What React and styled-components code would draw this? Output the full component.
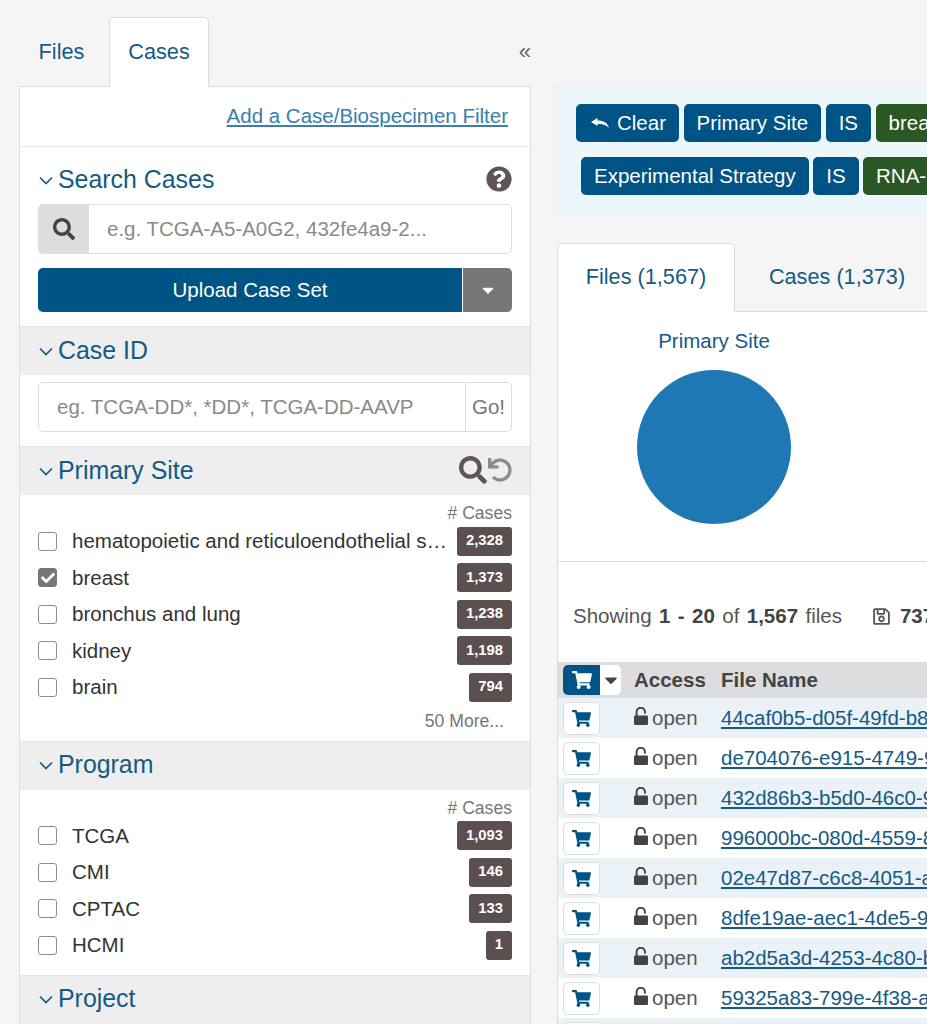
import React from 'react';
import styled, { createGlobalStyle } from 'styled-components';
import {
  FaCaretDown,
  FaCheck,
  FaQuestionCircle,
  FaRegSave,
  FaSearch,
  FaShoppingCart,
  FaUndo,
} from 'react-icons/fa';

const GlobalStyle = createGlobalStyle`
  html, body {
    margin: 0;
    padding: 0;
    background: #f5f5f5;
    font-family: "Liberation Sans", Arial, sans-serif;
    color: #333;
  }
  * { box-sizing: border-box; }
`;

const Page = styled.div`
  width: 927px;
  height: 1024px;
  overflow: hidden;
  display: flex;
  align-items: flex-start;
  padding: 17px 0 0 19px;
`;

const LeftColumn = styled.div`
  flex: none;
  width: 512px;
`;

const RightColumn = styled.div`
  flex: none;
  width: 800px;
  margin: 68px 0 0 26px;
`;

const TabRow = styled.div`
  display: flex;
  align-items: flex-end;
  gap: ${p => p.$gap || 0}px;
  position: relative;
  z-index: 1;
  height: ${p => p.$height}px;
  margin-bottom: -1px;
`;

const Tab = styled.div`
  display: flex;
  align-items: center;
  justify-content: center;
  height: 100%;
  width: ${p => p.$width}px;
  padding-bottom: ${p => p.$lift || 0}px;
  font-size: 21.7px;
  color: #155a85;
  border-radius: 5px 5px 0 0;
  border: 1px solid ${p => (p.$active ? '#ddd' : 'transparent')};
  border-bottom-color: ${p => (p.$active ? '#fff' : 'transparent')};
  background: ${p => (p.$active ? '#fff' : 'transparent')};
`;

const CollapseIcon = styled.div`
  margin-left: auto;
  align-self: center;
  color: #666;
  font-size: 22px;
  line-height: 25px;
  padding-bottom: 1px;
`;

const Panel = styled.div`
  background: #fff;
  border: 1px solid #ddd;
`;

const LinkRow = styled.div`
  height: 60px;
  display: flex;
  align-items: center;
  justify-content: flex-end;
  padding: 0 22px 2px 0;
  border-bottom: 1px solid #e6e6e6;
`;

const FilterLink = styled.a`
  font-size: 20.5px;
  color: #3b7eab;
  text-decoration: underline;
`;

const SearchSection = styled.div`
  padding: 17px 18px 14px;
  border-bottom: 1px solid #e6e6e6;
`;

const FacetHeader = styled.div`
  display: flex;
  align-items: center;
  height: 48px;
  padding: 0 18px 2px;
  background: ${p => (p.$plain ? 'transparent' : '#eee')};
  color: #155a85;
  font-size: 24.9px;
  ${p => p.$plain && 'height: 30px; padding: 0; margin-bottom: 10px;'}
`;

const Chevron = styled.svg`
  flex: none;
  width: 14px;
  height: 9px;
  margin: 2px 5px 0 1px;
  fill: none;
  stroke: #155a85;
  stroke-width: 1.7;
`;

const HeaderTools = styled.div`
  margin-left: auto;
  display: flex;
  align-items: center;
  gap: ${p => p.$gap || 0}px;
  color: #5f5555;
`;

const InputGroup = styled.div`
  display: flex;
  height: 50px;
  border: 1px solid #ddd;
  border-radius: 5px;
  overflow: hidden;
  background: #fff;
`;

const InputAddon = styled.div`
  flex: none;
  width: 50px;
  display: flex;
  align-items: center;
  justify-content: center;
  background: #ddd;
  color: #444;
  font-size: 22px;
`;

const Placeholder = styled.div`
  flex: 1;
  display: flex;
  align-items: center;
  font-size: 20.5px;
  color: #8a8a8a;
  padding-left: 18px;
`;

const GoButton = styled.div`
  flex: none;
  width: 46px;
  display: flex;
  align-items: center;
  justify-content: center;
  font-size: 20.5px;
  color: #777;
  border-left: 1px solid #ddd;
`;

const UploadGroup = styled.div`
  display: flex;
  height: 44px;
  margin-top: 14px;
  border-radius: 5px;
  overflow: hidden;
`;

const UploadButton = styled.div`
  flex: 1;
  display: flex;
  align-items: center;
  justify-content: center;
  background: #005385;
  color: #fff;
  font-size: 20.5px;
`;

const UploadCaret = styled.div`
  flex: none;
  width: 50px;
  display: flex;
  align-items: center;
  justify-content: center;
  background: #777;
  border-left: 1px solid #fff;
  color: #fff;
  font-size: 18px;
`;

const InputSection = styled.div`
  padding: 7px 18px 14px;
  border-bottom: 1px solid #e6e6e6;
`;

const FacetBody = styled.div`
  padding: 9px 18px ${p => p.$bottom}px;
  border-bottom: 1px solid #e6e6e6;
`;

const CountHeading = styled.div`
  text-align: right;
  font-size: 17.6px;
  line-height: 18px;
  color: #777;
  margin-bottom: 1px;
`;

const FacetRow = styled.div`
  display: flex;
  align-items: center;
  height: 36.5px;
`;

const CheckBox = styled.div`
  flex: none;
  width: 19px;
  height: 19px;
  margin-right: 15px;
  border-radius: 3px;
  border: 1px solid ${p => (p.$checked ? '#777' : '#8d8d8d')};
  background: ${p => (p.$checked ? '#777' : '#fff')};
  color: #fff;
  font-size: 14px;
  display: flex;
  align-items: center;
  justify-content: center;
`;

const FacetLabel = styled.div`
  flex: 1;
  min-width: 0;
  white-space: nowrap;
  overflow: hidden;
  text-overflow: ellipsis;
  font-size: 20.5px;
  color: #333;
  padding-right: 10px;
`;

const CountBadge = styled.div`
  flex: none;
  height: 29px;
  padding: 0 9px 2px;
  border-radius: 3px;
  background: #5c4f4f;
  color: #fff;
  font-size: 14.8px;
  font-weight: 700;
  display: flex;
  align-items: center;
  justify-content: center;
`;

const MoreLink = styled.div`
  text-align: right;
  font-size: 17.6px;
  color: #777;
  padding: 5px 8px 0 0;
`;

const QueryBar = styled.div`
  height: 128px;
  padding: 18px 18px 0;
  background: #ebf7fb;
  border: 1px solid #e3f1f6;
`;

const QueryRow = styled.div`
  display: flex;
  gap: 4.5px;
  margin-bottom: 15px;
  margin-left: ${p => p.$indent}px;
`;

const QueryChip = styled.div`
  height: 38px;
  padding: 0 13px 0 ${p => (p.$icon ? 15 : 13)}px;
  display: flex;
  align-items: center;
  gap: 8px;
  border-radius: 5px;
  font-size: 20.5px;
  color: #fff;
  white-space: nowrap;
  background: ${p => (p.$value ? '#2a5723' : '#005385')};
`;

const ClearArrow = styled.svg`
  flex: none;
  width: 18px;
  height: 10px;
  fill: #fff;
`;

const ResultTabs = styled(TabRow)`
  margin-top: 30px;
`;

const ResultPanel = styled.div`
  background: #fff;
  border: 1px solid #ddd;
  border-right: none;
`;

const ChartArea = styled.div`
  height: 250px;
  padding: 17px 0 0 0;
  border-bottom: 1px solid #ddd;
`;

const ChartBox = styled.div`
  width: 312px;
  display: flex;
  flex-direction: column;
  align-items: center;
  gap: 17px;
  color: #155a85;
  font-size: 20.5px;
  line-height: 24px;
`;

const Summary = styled.div`
  height: 100px;
  padding: 42px 0 0 15px;
  display: flex;
  align-items: flex-start;
  font-size: 20.5px;
  line-height: 24px;
  word-spacing: 1.7px;
  color: #555;
  white-space: nowrap;
  b { color: #444; }
`;

const SaveSize = styled.span`
  display: inline-flex;
  align-items: center;
  gap: 9px;
  margin-left: 30px;
  svg { font-size: 19px; }
`;

const FileTable = styled.div`
  display: flex;
  flex-direction: column;
`;

const TableHead = styled.div`
  height: 36px;
  display: flex;
  align-items: center;
  background: #ddd;
  padding-left: 5px;
  font-size: 20.5px;
  font-weight: 700;
  color: #444;
`;

const CartSplit = styled.div`
  flex: none;
  width: 58px;
  height: 30px;
  display: flex;
  border-radius: 5px;
  overflow: hidden;
  background: #fff;
  margin-right: 13px;
`;

const CartAll = styled.div`
  width: 37px;
  display: flex;
  align-items: center;
  justify-content: center;
  background: #005385;
  color: #fff;
  font-size: 20px;
`;

const CartMenu = styled.div`
  flex: 1;
  display: flex;
  align-items: center;
  justify-content: center;
  color: #444;
  font-size: 20px;
`;

const AccessHead = styled.div`
  width: 87px;
`;

const TableRow = styled.div`
  height: 40px;
  display: flex;
  align-items: center;
  padding-left: 5px;
  background: ${p => (p.$striped ? '#eaf2f7' : '#fff')};
  font-size: 20.5px;
`;

const CartButton = styled.div`
  flex: none;
  width: 37px;
  height: 33px;
  margin-right: 34px;
  display: flex;
  align-items: center;
  justify-content: center;
  border: 1px solid #ddd;
  border-radius: 5px;
  background: #fff;
  color: #005385;
  font-size: 19px;
`;

const AccessCell = styled.div`
  width: 87px;
  display: flex;
  align-items: center;
  gap: 4px;
  color: #555;
`;

const LockIcon = styled.svg`
  flex: none;
  width: 14px;
  height: 18px;
  margin-top: -4px;
`;

const FileLink = styled.a`
  color: #155a85;
  text-decoration: underline;
  white-space: nowrap;
`;

const primarySites = [
  { label: 'hematopoietic and reticuloendothelial system', count: '2,328' },
  { label: 'breast', count: '1,373', checked: true },
  { label: 'bronchus and lung', count: '1,238' },
  { label: 'kidney', count: '1,198' },
  { label: 'brain', count: '794' },
];

const programs = [
  { label: 'TCGA', count: '1,093' },
  { label: 'CMI', count: '146' },
  { label: 'CPTAC', count: '133' },
  { label: 'HCMI', count: '1' },
];

const files = [
  '44caf0b5-d05f-49fd-b8a1-3c2e7f0a1b64',
  'de704076-e915-4749-9c1e-5a0b7d2f8e13',
  '432d86b3-b5d0-46c0-9e4f-7a1c2b6d3f08',
  '996000bc-080d-4559-8b7a-2e4f1c9d0a57',
  '02e47d87-c6c8-4051-a3d2-9f6b8e1c4a70',
  '8dfe19ae-aec1-4de5-9a27-1d3c5e7f9b42',
  'ab2d5a3d-4253-4c80-b6e1-8f0a2c4d6e19',
  '59325a83-799e-4f38-a1c5-6b7d9e0f2a34',
  '7c1e4d92-3ab0-4e67-8d15-0f2b4c6a8e71',
];

const HeaderCaret = () => (
  <Chevron viewBox="0 0 14 9">
    <path d="M1 1.5l6 6 6-6" />
  </Chevron>
);

const OpenLock = () => (
  <LockIcon viewBox="0 0 14 18">
    <rect x="0" y="8.5" width="14" height="9.5" rx="1.2" fill="#444" />
    <path d="M2.6 9V5a4.2 4.2 0 0 1 8.4 0v1.5" fill="none" stroke="#444" strokeWidth="2" />
  </LockIcon>
);

function Facet({ title, rows, tools, bottom, more }) {
  return (
    <>
      <FacetHeader>
        <HeaderCaret />
        {title}
        {tools}
      </FacetHeader>
      <FacetBody $bottom={bottom}>
        <CountHeading># Cases</CountHeading>
        {rows.map(row => (
          <FacetRow key={row.label}>
            <CheckBox $checked={row.checked}>{row.checked && <FaCheck />}</CheckBox>
            <FacetLabel>{row.label}</FacetLabel>
            <CountBadge>{row.count}</CountBadge>
          </FacetRow>
        ))}
        {more && <MoreLink>{more}</MoreLink>}
      </FacetBody>
    </>
  );
}

export default function App() {
  return (
    <Page>
      <GlobalStyle />
      <LeftColumn>
        <TabRow $height={70} $gap={5}>
          <Tab $width={85}>Files</Tab>
          <Tab $active $width={100}>Cases</Tab>
          <CollapseIcon>«</CollapseIcon>
        </TabRow>
        <Panel>
          <LinkRow>
            <FilterLink>Add a Case/Biospecimen Filter</FilterLink>
          </LinkRow>
          <SearchSection>
            <FacetHeader $plain>
              <HeaderCaret />
              Search Cases
              <HeaderTools><FaQuestionCircle size={26} /></HeaderTools>
            </FacetHeader>
            <InputGroup>
              <InputAddon><FaSearch /></InputAddon>
              <Placeholder>e.g. TCGA-A5-A0G2, 432fe4a9-2...</Placeholder>
            </InputGroup>
            <UploadGroup>
              <UploadButton>Upload Case Set</UploadButton>
              <UploadCaret><FaCaretDown /></UploadCaret>
            </UploadGroup>
          </SearchSection>
          <FacetHeader>
            <HeaderCaret />
            Case ID
          </FacetHeader>
          <InputSection>
            <InputGroup>
              <Placeholder>eg. TCGA-DD*, *DD*, TCGA-DD-AAVP</Placeholder>
              <GoButton>Go!</GoButton>
            </InputGroup>
          </InputSection>
          <Facet
            title="Primary Site"
            rows={primarySites}
            bottom={9}
            more="50 More..."
            tools={
              <HeaderTools $gap={1}>
                <FaSearch size={28} />
                <FaUndo size={24} color="#8c8c8c" />
              </HeaderTools>
            }
          />
          <Facet title="Program" rows={programs} bottom={11} />
          <FacetHeader>
            <HeaderCaret />
            Project
          </FacetHeader>
        </Panel>
      </LeftColumn>
      <RightColumn>
        <QueryBar>
          <QueryRow $indent={0}>
            <QueryChip $icon>
              <ClearArrow viewBox="0 0 18 10">
                <path d="M0 4 6.5 0v2.6C12.5 2.6 16.5 5 18 10c-2.4-3-6-4.2-11.5-4V8z" />
              </ClearArrow>
              Clear
            </QueryChip>
            <QueryChip>Primary Site</QueryChip>
            <QueryChip>IS</QueryChip>
            <QueryChip $value>breast</QueryChip>
          </QueryRow>
          <QueryRow $indent={5}>
            <QueryChip>Experimental Strategy</QueryChip>
            <QueryChip>IS</QueryChip>
            <QueryChip $value>RNA-Seq</QueryChip>
          </QueryRow>
        </QueryBar>
        <ResultTabs $height={69}>
          <Tab $active $width={178} $lift={2}>Files (1,567)</Tab>
          <Tab $width={204} $lift={2}>Cases (1,373)</Tab>
        </ResultTabs>
        <ResultPanel>
          <ChartArea>
            <ChartBox>
              Primary Site
              <svg width="154" height="154" viewBox="0 0 154 154">
                <circle cx="77" cy="77" r="77" fill="#1f77b4" />
              </svg>
            </ChartBox>
          </ChartArea>
          <Summary>
            <span>Showing <b>1 - 20</b> of <b>1,567</b> files</span>
            <SaveSize><FaRegSave /><b>737.15 GB</b></SaveSize>
          </Summary>
          <FileTable>
            <TableHead>
              <CartSplit>
                <CartAll><FaShoppingCart /></CartAll>
                <CartMenu><FaCaretDown /></CartMenu>
              </CartSplit>
              <AccessHead>Access</AccessHead>
              File Name
            </TableHead>
            {files.map((name, i) => (
              <TableRow key={name} $striped={i % 2 === 0}>
                <CartButton><FaShoppingCart /></CartButton>
                <AccessCell><OpenLock />open</AccessCell>
                <FileLink>{name}</FileLink>
              </TableRow>
            ))}
          </FileTable>
        </ResultPanel>
      </RightColumn>
    </Page>
  );
}
